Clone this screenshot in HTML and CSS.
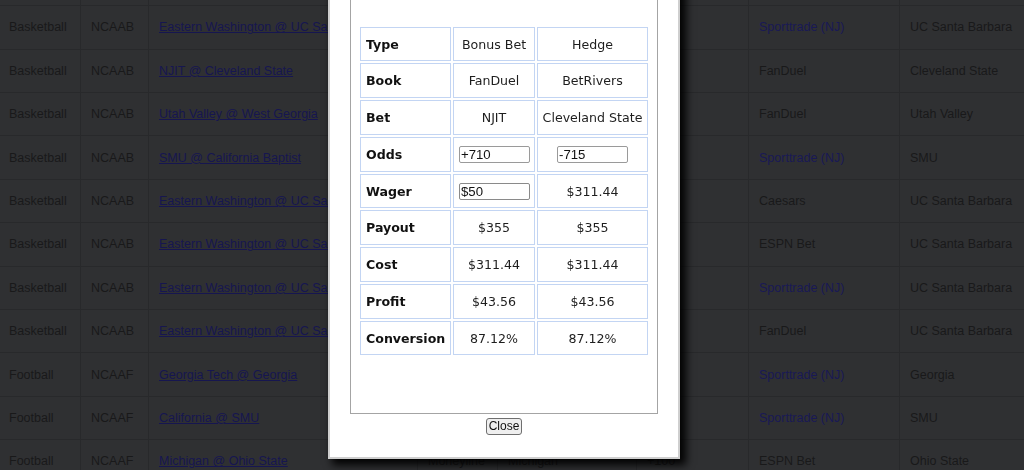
FILE: index.html
```html
<!DOCTYPE html>
<html>
<head>
<meta charset="utf-8">
<link rel="stylesheet" href="styles.css">
</head>
<body>
<table class="bets">
  <colgroup>
    <col class="c1"><col class="c2"><col class="c3"><col class="c4"><col class="c5"><col class="c6"><col class="c7"><col class="c8">
  </colgroup>
  <tbody>
    <tr><td>Basketball</td><td>NCAAB</td><td><a href="#">Eastern Washington @ UC Santa Barbara</a></td><td>Moneyline</td><td>UC Santa Barbara</td><td>-110</td><td><span class="book">Sporttrade (NJ)</span></td><td>UC Santa Barbara</td></tr>
    <tr><td>Basketball</td><td>NCAAB</td><td><a href="#">Eastern Washington @ UC Santa Barbara</a></td><td>Moneyline</td><td>Eastern Washington</td><td>+240</td><td><span class="book">Sporttrade (NJ)</span></td><td>UC Santa Barbara</td></tr>
    <tr><td>Basketball</td><td>NCAAB</td><td><a href="#">NJIT @ Cleveland State</a></td><td>Moneyline</td><td>NJIT</td><td>+710</td><td>FanDuel</td><td>Cleveland State</td></tr>
    <tr><td>Basketball</td><td>NCAAB</td><td><a href="#">Utah Valley @ West Georgia</a></td><td>Moneyline</td><td>West Georgia</td><td>+400</td><td>FanDuel</td><td>Utah Valley</td></tr>
    <tr><td>Basketball</td><td>NCAAB</td><td><a href="#">SMU @ California Baptist</a></td><td>Moneyline</td><td>California Baptist</td><td>+450</td><td><span class="book">Sporttrade (NJ)</span></td><td>SMU</td></tr>
    <tr><td>Basketball</td><td>NCAAB</td><td><a href="#">Eastern Washington @ UC Santa Barbara</a></td><td>Moneyline</td><td>Eastern Washington</td><td>+250</td><td>Caesars</td><td>UC Santa Barbara</td></tr>
    <tr><td>Basketball</td><td>NCAAB</td><td><a href="#">Eastern Washington @ UC Santa Barbara</a></td><td>Moneyline</td><td>Eastern Washington</td><td>+245</td><td>ESPN Bet</td><td>UC Santa Barbara</td></tr>
    <tr><td>Basketball</td><td>NCAAB</td><td><a href="#">Eastern Washington @ UC Santa Barbara</a></td><td>Moneyline</td><td>Eastern Washington</td><td>+260</td><td><span class="book">Sporttrade (NJ)</span></td><td>UC Santa Barbara</td></tr>
    <tr><td>Basketball</td><td>NCAAB</td><td><a href="#">Eastern Washington @ UC Santa Barbara</a></td><td>Moneyline</td><td>Eastern Washington</td><td>+255</td><td>FanDuel</td><td>UC Santa Barbara</td></tr>
    <tr><td>Football</td><td>NCAAF</td><td><a href="#">Georgia Tech @ Georgia</a></td><td>Moneyline</td><td>Georgia Tech</td><td>+700</td><td><span class="book">Sporttrade (NJ)</span></td><td>Georgia</td></tr>
    <tr><td>Football</td><td>NCAAF</td><td><a href="#">California @ SMU</a></td><td>Moneyline</td><td>California</td><td>+320</td><td><span class="book">Sporttrade (NJ)</span></td><td>SMU</td></tr>
    <tr><td>Football</td><td>NCAAF</td><td><a href="#">Michigan @ Ohio State</a></td><td>Moneyline</td><td>Michigan</td><td>+100</td><td>ESPN Bet</td><td>Ohio State</td></tr>
  </tbody>
</table>

<div class="modal">
  <div class="panel">
    <table class="calc">
      <tr><th>Type</th><td>Bonus Bet</td><td>Hedge</td></tr>
      <tr><th>Book</th><td>FanDuel</td><td>BetRivers</td></tr>
      <tr><th>Bet</th><td>NJIT</td><td>Cleveland State</td></tr>
      <tr><th>Odds</th><td><input class="field" type="text" value="+710"></td><td><input class="field" type="text" value="-715"></td></tr>
      <tr><th>Wager</th><td><input class="field active" type="text" value="$50"></td><td>$311.44</td></tr>
      <tr><th>Payout</th><td>$355</td><td>$355</td></tr>
      <tr><th>Cost</th><td>$311.44</td><td>$311.44</td></tr>
      <tr><th>Profit</th><td>$43.56</td><td>$43.56</td></tr>
      <tr><th>Conversion</th><td>87.12%</td><td>87.12%</td></tr>
    </table>
  </div>
  <div class="actions"><button class="close" type="button">Close</button></div>
</div>
</body>
</html>
```

FILE: styles.css
```css
html, body {
  margin: 0;
  padding: 0;
  background: #2f3032;
  overflow: hidden;
}

.bets {
  border-collapse: collapse;
  table-layout: fixed;
  width: 1102px;
  margin: -38.1px 0 0 -2px;
  font-family: "Liberation Sans", Arial, sans-serif;
  font-size: 12.5px;
  color: #19191a;
}
.c1 { width: 82px; }
.c2 { width: 68px; }
.c3 { width: 269px; }
.c4 { width: 80px; }
.c5 { width: 139px; }
.c6 { width: 112px; }
.c7 { width: 151px; }
.c8 { width: 201px; }

.bets tr { height: 43.4px; }
.bets td {
  border: 1px solid #28292b;
  padding: 0 10px;
  white-space: nowrap;
  overflow: hidden;
  vertical-align: middle;
}
.bets a { color: #161650; text-decoration: underline; }
.bets .book { color: #191955; }

.modal {
  position: fixed;
  left: 328px;
  top: -40px;
  width: 352px;
  box-sizing: border-box;
  background: #fff;
  border: 2px solid #cfcfcf;
  padding: 20px 20px 22px;
  box-shadow: 5px 5px 8px 1px rgba(0, 0, 0, 0.95);
}

.panel {
  border: 1px solid #a4a4a4;
  padding: 41.7px 7px 56px;
}

.calc {
  width: 100%;
  border-collapse: separate;
  border-spacing: 2px;
  table-layout: fixed;
  font-family: "DejaVu Sans", Verdana, sans-serif;
  font-size: 12.6px;
  color: #1e1e1e;
}
.calc th, .calc td {
  border: 1px solid #c3d5f3;
  height: 32.75px;
  padding: 0 4px 0 5px;
  box-sizing: content-box;
  white-space: nowrap;
}
.calc th {
  width: 80px;
  text-align: left;
  font-weight: bold;
  color: #111;
}
.calc td { text-align: center; }
.calc tr > :nth-child(2) { width: 70px; padding: 0 5px; }
.calc tr > :nth-child(3) { padding: 0 2px; }

.field {
  width: 71px;
  height: 17px;
  box-sizing: border-box;
  border: 1px solid #9a9a9a;
  border-radius: 2px;
  padding: 0 1px;
  margin: 0;
  font-family: "Liberation Sans", Arial, sans-serif;
  font-size: 13.2px;
  color: #111;
  background: #fff;
  vertical-align: middle;
}
.field.active { border-color: #8a8a8a; }

.actions {
  text-align: center;
  padding-top: 4px;
  line-height: 0;
}
.close {
  font-family: "Liberation Sans", Arial, sans-serif;
  font-size: 12px;
  line-height: 13px;
  height: 17px;
  padding: 1px 2px;
  margin: 0;
  border: 1px solid #6f6f6f;
  border-radius: 3px;
  background: #efefef;
  color: #111;
}
```
